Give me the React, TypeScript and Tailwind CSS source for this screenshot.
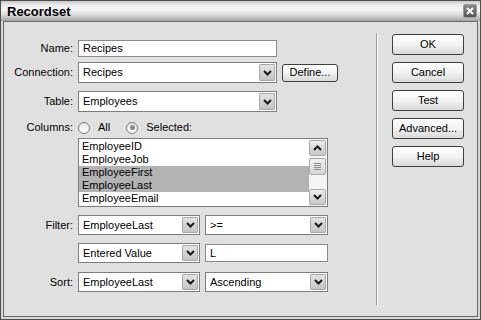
import React from "react";

const Chevron = ({ up = false }: { up?: boolean }) => (
  <svg width="9" height="6" viewBox="0 0 9 6" className="block">
    <path
      d={up ? "M1 5 L4.5 1.5 L8 5" : "M1 1 L4.5 4.5 L8 1"}
      fill="none"
      stroke="#1a1a1a"
      strokeWidth="2"
    />
  </svg>
);

const ArrowBox = ({ up = false }: { up?: boolean }) => (
  <div className="w-[16px] self-stretch m-[1px] border border-[#a9a9a9] rounded-[1px] bg-[linear-gradient(to_bottom,#e4e4e4,#c4c4c4)] flex items-center justify-center">
    <Chevron up={up} />
  </div>
);

const Select = ({ value, w }: { value: string; w: string }) => (
  <div className={`${w} h-[20px] border border-[#7d7d7d] bg-white flex`}>
    <div className="flex-1 flex items-center pl-[4px] leading-none">{value}</div>
    <ArrowBox />
  </div>
);

const Input = ({ value, w, h }: { value: string; w: string; h: string }) => (
  <div className={`${w} ${h} border border-[#8a8a8a] bg-white flex items-center pl-[4px] leading-none`}>
    {value}
  </div>
);

const Btn = ({ label, cls }: { label: string; cls: string }) => (
  <div
    className={`${cls} border border-[#3e3e3e] rounded-[3px] bg-[linear-gradient(to_bottom,#ffffff,#f2f2f2_50%,#d9d9d9)] flex items-center justify-center leading-none`}
  >
    {label}
  </div>
);

const Label = ({ text }: { text: string }) => (
  <div className="w-[69px] text-right leading-none pr-0">{text}</div>
);

const Radio = ({ checked }: { checked: boolean }) => (
  <div className="w-[12px] h-[12px] rounded-full border border-[#7a7a7a] bg-[linear-gradient(to_bottom,#e6e6e6,#ffffff)] flex items-center justify-center">
    {checked && <div className="w-[5px] h-[5px] rounded-full bg-[#8a8a8a]" />}
  </div>
);

export default function App() {
  const items = ["EmployeeID", "EmployeeJob", "EmployeeFirst", "EmployeeLast", "EmployeeEmail"];
  return (
    <div
      className="w-[481px] h-[320px] border border-[#4e4e4e] bg-[#d6d6d6] flex flex-col text-[11px] text-black overflow-hidden"
      style={{ fontFamily: '"Liberation Sans", Arial, sans-serif' }}
    >
      {/* title bar */}
      <div className="h-[20px] flex items-center justify-between pl-[6px] pr-[3px] bg-[linear-gradient(to_bottom,#c8c8c8_0%,#ececec_20%,#f6f6f6_45%,#d2d2d2_75%,#a2a2a2_100%)]">
        <div className="text-[13px] font-bold leading-none">Recordset</div>
        <div className="w-[14px] h-[14px] rounded-[2px] border border-[#9a9a9a] bg-[linear-gradient(to_bottom,#8a8a8a,#555555)] flex items-center justify-center">
          <svg width="8" height="8" viewBox="0 0 8 8">
            <path d="M1 1 L7 7 M7 1 L1 7" stroke="#ffffff" strokeWidth="2" />
          </svg>
        </div>
      </div>
      {/* body */}
      <div className="flex-1 px-[2px] pb-[2px] flex">
        <div className="flex-1 border border-[#6a6a6a] bg-[#e0e0e0] flex">
          {/* form column */}
          <div className="w-[372px] flex flex-col pt-[18px]">
            <div className="flex items-center h-[17px]">
              <Label text="Name:" />
              <div className="ml-[5px]">
                <Input value="Recipes" w="w-[199px]" h="h-[17px]" />
              </div>
            </div>
            <div className="flex items-center h-[21px] mt-[5px]">
              <Label text="Connection:" />
              <div className="ml-[5px] flex items-center">
                <div className="w-[199px] h-[21px] border border-[#7d7d7d] bg-white flex">
                  <div className="flex-1 flex items-center pl-[4px] leading-none">Recipes</div>
                  <ArrowBox />
                </div>
                <Btn label="Define..." cls="ml-[5px] w-[56px] h-[18px]" />
              </div>
            </div>
            <div className="flex items-center h-[21px] mt-[8px]">
              <Label text="Table:" />
              <div className="ml-[5px]">
                <div className="w-[199px] h-[21px] border border-[#7d7d7d] bg-white flex">
                  <div className="flex-1 flex items-center pl-[4px] leading-none">Employees</div>
                  <ArrowBox />
                </div>
              </div>
            </div>
            <div className="flex items-center h-[13px] mt-[9px]">
              <Label text="Columns:" />
              <div className="ml-[5px] flex items-center">
                <Radio checked={false} />
                <span className="ml-[8px] leading-none">All</span>
                <div className="ml-[16px]">
                  <Radio checked={true} />
                </div>
                <span className="ml-[8px] leading-none">Selected:</span>
              </div>
            </div>
            <div className="flex mt-[4px]">
              <div className="w-[69px]" />
              <div className="ml-[5px] w-[250px] h-[69px] border border-[#7d7d7d] bg-white flex">
                <div className="flex-1 pt-[1px]">
                  {items.map((it, i) => (
                    <div
                      key={it}
                      className={`h-[13px] flex items-center pl-[3px] leading-none ${
                        i === 2 || i === 3 ? "bg-[#b3b3b3]" : ""
                      }`}
                    >
                      {it}
                    </div>
                  ))}
                </div>
                <div className="w-[18px] flex flex-col bg-[#f4f4f4] pr-[1px] py-[1px]">
                  <div className="h-[16px] border border-[#a9a9a9] rounded-[2px] bg-[linear-gradient(to_bottom,#ececec,#c8c8c8)] flex items-center justify-center">
                    <Chevron up />
                  </div>
                  <div className="flex-1">
                    <div className="mt-[2px] h-[17px] border border-[#a9a9a9] rounded-[2px] bg-[linear-gradient(to_bottom,#f0f0f0,#d6d6d6)] flex flex-col items-center justify-center gap-[1px]">
                      <div className="w-[7px] h-[1px] bg-[#8c8c8c]" />
                      <div className="w-[7px] h-[1px] bg-[#8c8c8c]" />
                      <div className="w-[7px] h-[1px] bg-[#8c8c8c]" />
                      <div className="w-[7px] h-[1px] bg-[#8c8c8c]" />
                    </div>
                  </div>
                  <div className="h-[16px] border border-[#a9a9a9] rounded-[2px] bg-[linear-gradient(to_bottom,#ececec,#c8c8c8)] flex items-center justify-center">
                    <Chevron />
                  </div>
                </div>
              </div>
            </div>
            <div className="flex items-center h-[20px] mt-[8px]">
              <Label text="Filter:" />
              <div className="ml-[5px] flex">
                <Select value="EmployeeLast" w="w-[122px]" />
                <div className="ml-[5px]">
                  <Select value=">=" w="w-[123px]" />
                </div>
              </div>
            </div>
            <div className="flex items-center h-[20px] mt-[8px]">
              <Label text="" />
              <div className="ml-[5px] flex items-center">
                <Select value="Entered Value" w="w-[122px]" />
                <div className="ml-[5px]">
                  <Input value="L" w="w-[123px]" h="h-[18px]" />
                </div>
              </div>
            </div>
            <div className="flex items-center h-[20px] mt-[9px]">
              <Label text="Sort:" />
              <div className="ml-[5px] flex">
                <Select value="EmployeeLast" w="w-[122px]" />
                <div className="ml-[5px]">
                  <Select value="Ascending" w="w-[123px]" />
                </div>
              </div>
            </div>
          </div>
          {/* separator */}
          <div className="my-[11px] flex">
            <div className="w-[1px] bg-[#9c9c9c]" />
            <div className="w-[1px] bg-[#fafafa]" />
          </div>
          {/* buttons */}
          <div className="ml-[14px] pt-[12px] flex flex-col gap-[7px]">
            <Btn label="OK" cls="w-[72px] h-[21px]" />
            <Btn label="Cancel" cls="w-[72px] h-[21px]" />
            <Btn label="Test" cls="w-[72px] h-[21px]" />
            <Btn label="Advanced..." cls="w-[72px] h-[21px]" />
            <Btn label="Help" cls="w-[72px] h-[21px]" />
          </div>
        </div>
      </div>
    </div>
  );
}
